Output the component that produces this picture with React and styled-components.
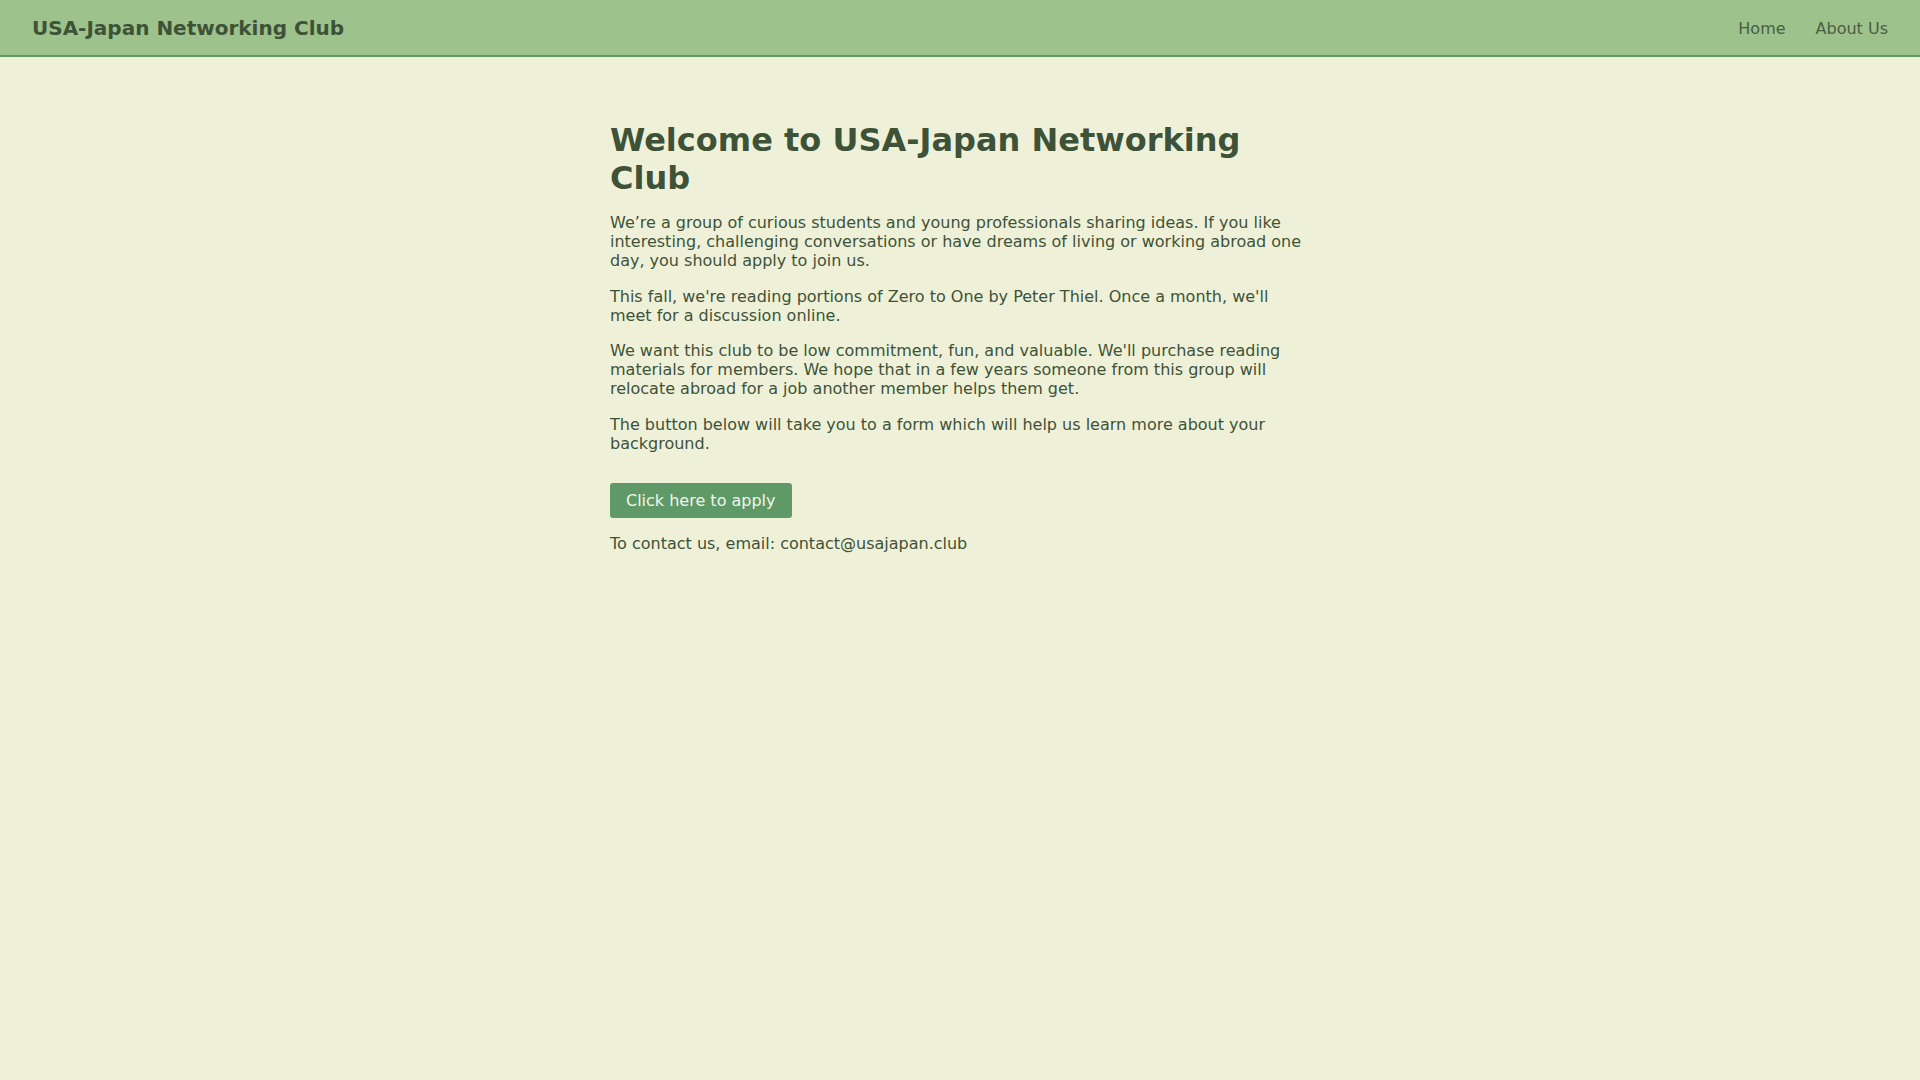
import React from "react";
import styled, { createGlobalStyle } from "styled-components";

const Global = createGlobalStyle`
  html, body {
    margin: 0;
    padding: 0;
    background: #eef1d8;
    min-height: 100%;
  }
  body {
    font-family: "DejaVu Sans", "Liberation Sans", sans-serif;
    color: #3e5238;
  }
`;

const Page = styled.div`
  min-height: 100vh;
  background: #eef1d8;
`;

const Header = styled.header`
  display: flex;
  align-items: center;
  justify-content: space-between;
  height: 55px;
  padding: 0 32px;
  background: #9dc28b;
  border-bottom: 2px solid #5f9a63;
`;

const Brand = styled.a`
  font-size: 20px;
  font-weight: bold;
  color: #3e5238;
  text-decoration: none;
`;

const Nav = styled.nav`
  display: flex;
  gap: 30px;
  padding-top: 2px;
`;

const NavLink = styled.a`
  font-size: 16px;
  color: #4a5e43;
  text-decoration: none;
`;

const Main = styled.main`
  max-width: 700px;
  margin: 0 auto;
  padding: 64px 0 40px;
`;

const Title = styled.h1`
  margin: 0 0 16px;
  font-size: 32px;
  line-height: normal;
  font-weight: bold;
  color: #3e5238;
`;

const Para = styled.p`
  margin: 0 0 16px;
  font-size: 16px;
  line-height: 1.2;
  color: #3e5238;
`;

const ApplyButton = styled.a`
  display: block;
  width: fit-content;
  margin-top: 30px;
  padding: 8px 16px;
  font-size: 16px;
  line-height: 19px;
  color: #f2f5e8;
  background: #5f9967;
  border-radius: 3px;
  text-decoration: none;
`;

const Contact = styled.p`
  margin: 16px 0 0;
  font-size: 16px;
  line-height: 1.2;
  color: #3e5238;
`;

export default function App() {
  return (
    <Page>
      <Global />
      <Header>
        <Brand href="#">USA-Japan Networking Club</Brand>
        <Nav>
          <NavLink href="#">Home</NavLink>
          <NavLink href="#">About Us</NavLink>
        </Nav>
      </Header>
      <Main>
        <Title>Welcome to USA-Japan Networking Club</Title>
        <Para>
          We’re a group of curious students and young professionals sharing ideas. If you like
          interesting, challenging conversations or have dreams of living or working abroad one
          day, you should apply to join us.
        </Para>
        <Para>
          This fall, we're reading portions of Zero to One by Peter Thiel. Once a month, we'll
          meet for a discussion online.
        </Para>
        <Para>
          We want this club to be low commitment, fun, and valuable. We'll purchase reading
          materials for members. We hope that in a few years someone from this group will
          relocate abroad for a job another member helps them get.
        </Para>
        <Para>
          The button below will take you to a form which will help us learn more about your
          background.
        </Para>
        <ApplyButton href="#">Click here to apply</ApplyButton>
        <Contact>To contact us, email: contact@usajapan.club</Contact>
      </Main>
    </Page>
  );
}
